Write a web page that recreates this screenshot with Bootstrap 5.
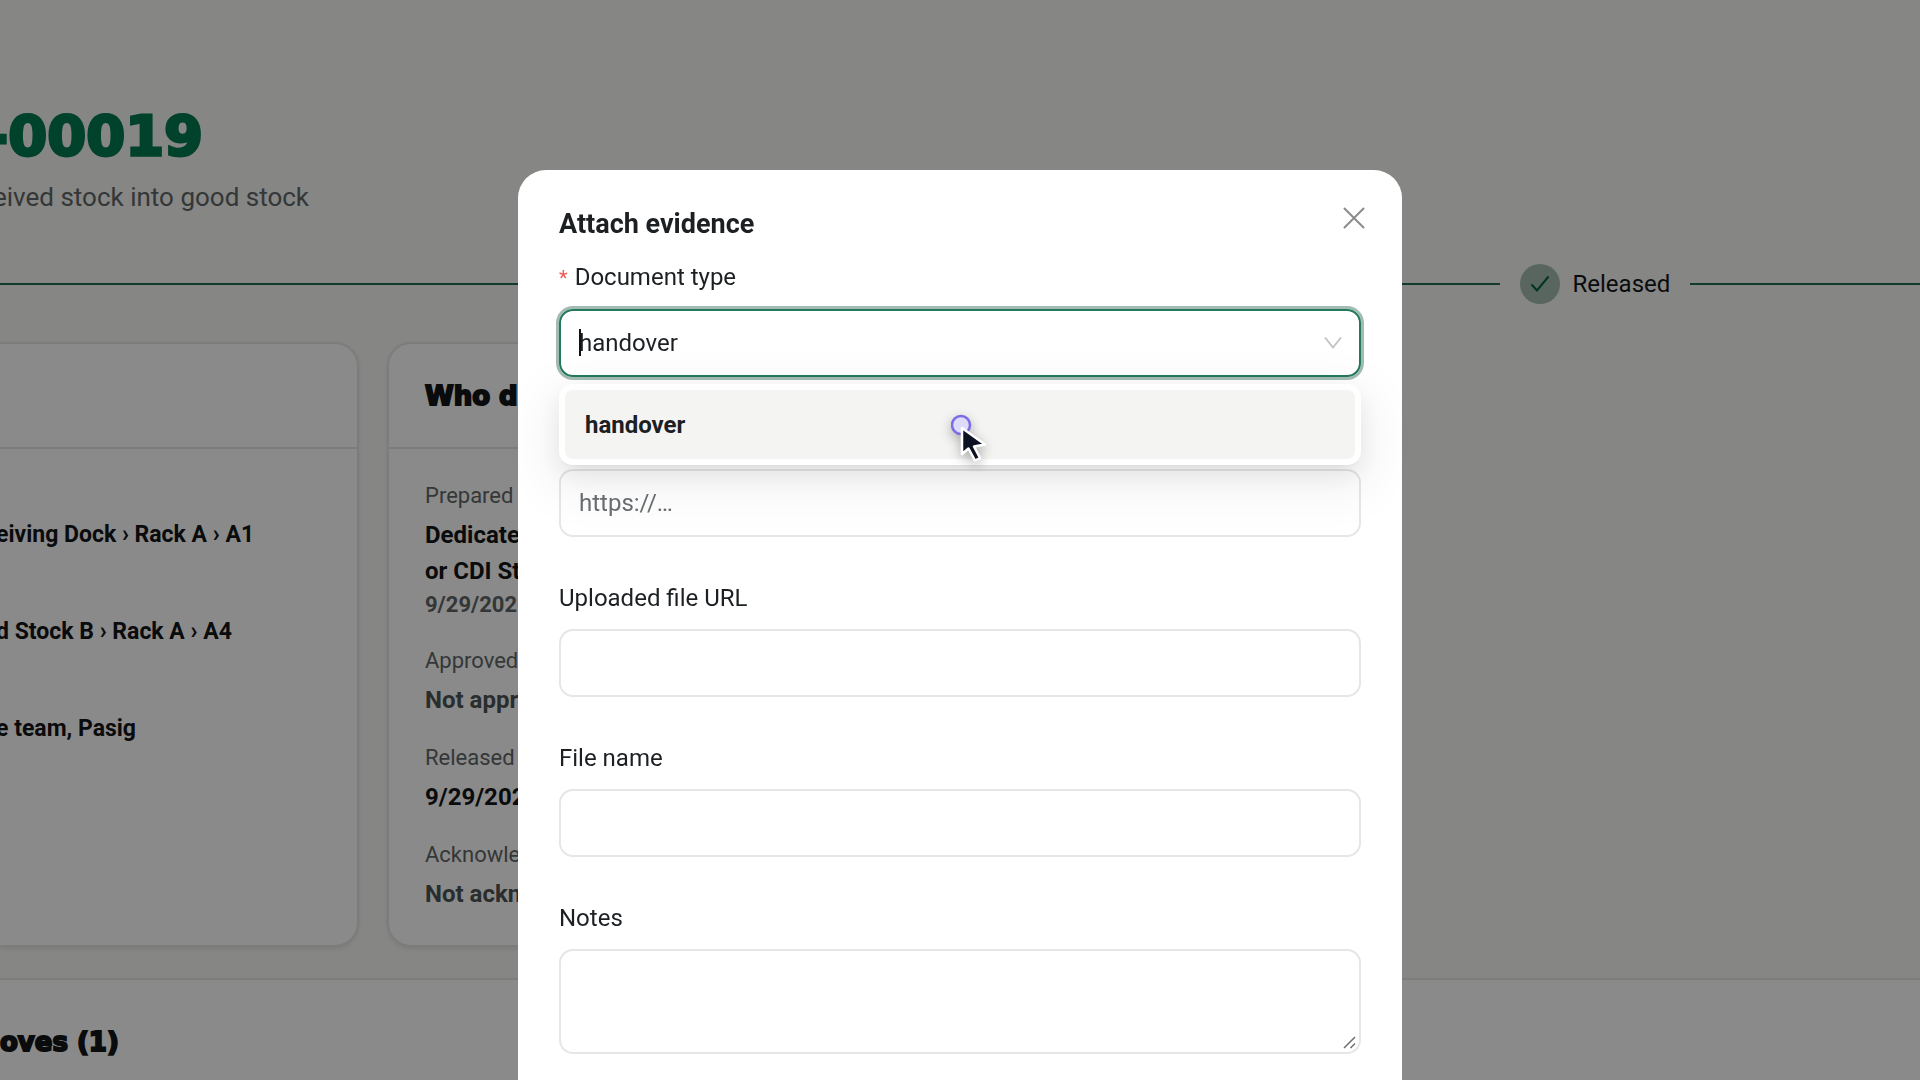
<!DOCTYPE html>
<html lang="en">
<head>
<meta charset="utf-8">
<meta name="viewport" content="width=device-width, initial-scale=1">
<title>Attach evidence</title>
<link href="https://cdn.jsdelivr.net/npm/bootstrap@5.3.0/dist/css/bootstrap.min.css" rel="stylesheet">
<style>
:root { --ink: #121416; --muted: #606565; --line: #e2e2e0; --brand: #007850; --edge: #e6e6e6; }
body { font-family: Roboto, sans-serif; font-size: 24px; line-height: 36px; color: var(--ink); background: #f4f4f3; overflow: hidden; }
.doc-head { padding-top: 100px; padding-bottom: 49px; }
.doc-code { font: 700 56px/72px "DejaVu Sans", sans-serif; color: var(--brand); -webkit-text-stroke: 3px var(--brand); margin: 0 0 7px -15px; }
.doc-sub { font-size: 26px; line-height: 36px; color: var(--muted); margin: 0 0 0 -7px; }
.step-line { height: 2px; background: #216a53; }
.step-before { flex: 0 0 1500px; flex-basis: 78.1%; }
.step-dot { width: 40px; height: 40px; background: #a2baae; }
.steps { gap: 20px; }
.step-name { gap: 13px; }
.panels { margin-top: 38px; gap: 28px; }
.panel { background: #fcfcfb; border: 2px solid var(--line); border-radius: 24px; box-shadow: 0 2px 4px rgba(0,0,0,.08); }
.panel-left { flex: 0 0 359px; border-left: 0; border-top-left-radius: 0; border-bottom-left-radius: 0; }
.panel-right { flex: 0 0 900px; }
.panel-title { height: 105px; padding: 0 36px; border-bottom: 2px solid var(--line); }
.black-title { font: 700 26px/36px "DejaVu Sans", sans-serif; -webkit-text-stroke: 2px var(--ink); margin: 0; }
.panel-facts { padding: 31px 36px 33px; }
.fact { display: flex; flex-direction: column; gap: 5px; margin-bottom: 24px; }
.fact:last-child { margin-bottom: 0; }
.fact dt { font-weight: 400; font-size: 22px; line-height: 32px; color: var(--muted); }
.fact dd { font-weight: 700; margin: 0; }
.fact .pending { color: #4c5252; }
.fact .stamp { display: block; font-size: 22px; line-height: 32px; color: var(--muted); }
.route { padding: 68px 0 0; margin: 0 0 0 -4px; display: flex; flex-direction: column; gap: 61px; font-size: 23px; font-weight: 700; }
.moves { margin-top: 31px; padding: 44px 0 80px; background: #fcfcfb; border-top: 2px solid var(--line); }
.modal-backdrop { --bs-backdrop-opacity: .45; }
.modal { overflow: hidden; }
.modal-dialog { max-width: 884px; margin: 170px auto 0; }
.modal-content { border: 0; border-radius: 28px; padding: 34px 41px 60px; color: #1c2022; }
.modal-title { font-size: 27px; line-height: 40px; font-weight: 700; }
.close-x { width: 40px; height: 40px; top: 28px; right: 28px; line-height: 0; }
.evidence { margin-top: 17px; }
.field { margin-bottom: 45px; position: relative; }
.field > label { display: block; line-height: 32px; margin-bottom: 15px; }
.req { color: #f0564f; margin-right: 7px; font-size: 20px; }
.form-control, .form-select { font-size: 24px; line-height: 36px; height: 68px; padding: 14px 18px; border: 2px solid var(--edge); border-radius: 14px; color: #1c2022; background-color: transparent; background-image: none; }
.form-control::placeholder { color: #6b6e70; }
textarea.form-control { height: 105px; resize: none; }
#doctype { border-color: #24785c; box-shadow: 0 0 0 3px #a3bcb2; }
.chev { position: absolute; right: 19px; top: 27px; }
.caret { position: absolute; left: 20px; top: 20px; width: 2px; height: 27px; background: #111; }
.grip { position: absolute; right: 5px; bottom: 5px; }
.pick-menu { position: absolute; z-index: 5; left: 0; right: 0; top: 75px; padding: 6px; background: #fff; border-radius: 14px; box-shadow: 0 10px 27px rgba(0,0,0,.08), 0 5px 10px -7px rgba(0,0,0,.12), 0 15px 48px 14px rgba(0,0,0,.05); }
.pick-item { display: block; width: 100%; border: 0; border-radius: 8px; background: #f4f4f3; text-align: left; font-weight: 700; padding: 16px 20px; height: 69px; color: #1c2022; }
.pointer { position: absolute; z-index: 6; left: 50%; top: 103px; margin-left: -9px; filter: drop-shadow(0 4px 6px rgba(0,0,0,.3)); }
</style>
<script src="https://cdn.jsdelivr.net/npm/bootstrap@5.3.0/dist/js/bootstrap.bundle.min.js"></script>
</head>
<body>
<main>
  <header class="doc-head">
    <h1 class="doc-code">-00019</h1>
    <p class="doc-sub">eived stock into good stock</p>
  </header>
  <div class="steps d-flex align-items-center">
    <div class="step-line step-before"></div>
    <div class="step-name d-flex align-items-center">
      <span class="step-dot rounded-circle d-flex align-items-center justify-content-center">
        <svg width="20" height="18" viewBox="0 0 20 18" fill="none" stroke="#00613f" stroke-width="2"><path d="M1.5 9.5 7 15.500 18.500 1.500"/></svg>
      </span>
      <span>Released</span>
    </div>
    <div class="step-line flex-grow-1"></div>
  </div>
  <div class="panels d-flex">
    <section class="panel panel-left">
      <div class="panel-title"></div>
      <div class="route">
        <div>eiving Dock › Rack A › A1</div>
        <div>d Stock B › Rack A › A4</div>
        <div>e team, Pasig</div>
      </div>
    </section>
    <section class="panel panel-right">
      <div class="panel-title d-flex align-items-center"><h2 class="black-title">Who did what</h2></div>
      <dl class="panel-facts m-0">
        <div class="fact"><dt>Prepared by</dt><dd>Dedicated<br>or CDI Staff<span class="stamp">9/29/2026</span></dd></div>
        <div class="fact"><dt>Approved</dt><dd class="pending">Not approved</dd></div>
        <div class="fact"><dt>Released</dt><dd>9/29/2026</dd></div>
        <div class="fact"><dt>Acknowledged</dt><dd class="pending">Not acknowledged</dd></div>
      </dl>
    </section>
  </div>
  <section class="moves"><h2 class="black-title">oves (1)</h2></section>
</main>

<div class="modal-backdrop show"></div>
<div class="modal d-block" role="dialog" aria-modal="true" aria-labelledby="dlg-title">
  <div class="modal-dialog">
    <div class="modal-content">
      <h2 class="modal-title" id="dlg-title">Attach evidence</h2>
      <button type="button" class="close-x btn p-0 border-0 position-absolute" aria-label="Close">
        <svg width="22" height="22" viewBox="0 0 22 22" fill="none" stroke="#8b8b8b" stroke-width="2" stroke-linecap="round"><path d="M1.500 1.500 20.500 20.500M20.500 1.500 1.500 20.500"/></svg>
      </button>
      <form class="evidence">
        <div class="field">
          <label for="doctype"><span class="req">*</span>Document type</label>
          <div class="position-relative">
            <select id="doctype" class="form-select"><option>handover</option></select>
            <span class="caret"></span>
            <svg class="chev" width="18" height="14" viewBox="0 0 18 14" fill="none" stroke="#c4c4c4" stroke-width="2"><path d="M1 1.500 9 11.500 17 1.500"/></svg>
            <div class="pick-menu">
              <button type="button" class="pick-item">handover</button>
            </div>
            <svg class="pointer" width="40" height="54" viewBox="0 0 40 54">
              <circle cx="10" cy="13" r="9" fill="#dedbfa" stroke="#7b6be4" stroke-width="2.500"/>
              <path d="M11 16v26l6.500-5.500 6.500 12 5-2.500-6-11.500 11-2Z" fill="#0c1222" stroke="#fff" stroke-width="2.500" stroke-linejoin="round"/>
            </svg>
          </div>
        </div>
        <div class="field">
          <label for="link">URL</label>
          <input id="link" type="url" class="form-control" placeholder="https://…">
        </div>
        <div class="field">
          <label for="fileurl">Uploaded file URL</label>
          <input id="fileurl" type="url" class="form-control">
        </div>
        <div class="field">
          <label for="filename">File name</label>
          <input id="filename" type="text" class="form-control">
        </div>
        <div class="field">
          <label for="notes">Notes</label>
          <textarea id="notes" class="form-control"></textarea>
          <svg class="grip" width="13" height="13" viewBox="0 0 13 13" stroke="#6e6e6e" stroke-width="1.500"><path d="M1 12 12 1M7.500 12 12 7.500"/></svg>
        </div>
      </form>
    </div>
  </div>
</div>
</body>
</html>
